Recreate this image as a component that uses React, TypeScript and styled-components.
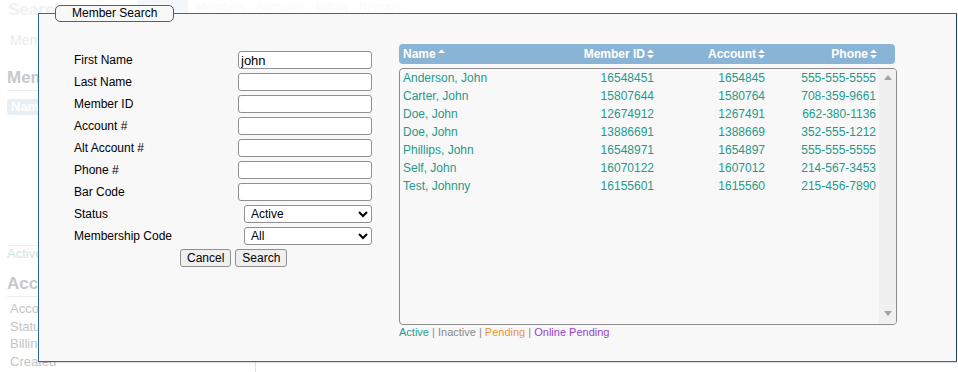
import React from "react";
import styled, { createGlobalStyle } from "styled-components";

const Global = createGlobalStyle`
  html, body { margin: 0; padding: 0; background: #fff; }
  body { font-family: "Liberation Sans", Arial, sans-serif; }
`;

const Page = styled.div`
  position: relative;
  display: flex;
  width: 958px;
  height: 372px;
  overflow: hidden;
  background: #fff;
`;

/* ---------- faded page behind the dialog ---------- */
const Sidebar = styled.div`
  display: flex;
  flex-direction: column;
  width: 255px;
  padding-left: 7px;
  box-sizing: border-box;
  flex: none;
`;

const TopTitle = styled.div`
  height: 20px;
  line-height: 20px;
  font-size: 17px;
  font-weight: bold;
  color: #f1f1f1;
  padding-left: 1px;
`;

const SubTitle = styled.div`
  margin-top: 10px;
  height: 20px;
  line-height: 20px;
  font-size: 14px;
  color: #ebebeb;
  padding-left: 3px;
`;

const FadedHeading = styled.div<{ $top: number }>`
  margin-top: ${(p) => p.$top}px;
  font-size: 17px;
  font-weight: bold;
  line-height: 20px;
  color: #c8c8c8;
  border-bottom: 1px solid #ececec;
  padding-bottom: 2px;
  width: 240px;
`;

const FadedPill = styled.div`
  margin-top: 8px;
  width: 120px;
  height: 16px;
  line-height: 16px;
  border-radius: 4px;
  background: #e6eef6;
  color: #fff;
  font-weight: bold;
  font-size: 13px;
  padding-left: 4px;
`;

const FadedStatus = styled.div`
  margin-top: 130px;
  border-top: 1px solid #efefef;
  width: 240px;
  padding-top: 1px;
  line-height: 14px;
  font-size: 13px;
  color: #cbe7e3;
`;

const FadedItem = styled.div<{ $first?: boolean }>`
  margin-top: ${(p) => (p.$first ? 3 : 0)}px;
  padding-left: 3px;
  line-height: 17.5px;
  font-size: 13px;
  color: #c4c4c4;
`;

const MainFaded = styled.div`
  flex: 1;
  display: flex;
  flex-direction: column;
`;

const TopNav = styled.div`
  display: flex;
  align-items: center;
  gap: 8px;
  height: 14px;
  margin-left: -117px;
`;

const NavBlock = styled.div`
  width: 50px;
  height: 14px;
  background: #f4f7fa;
`;

const NavText = styled.div`
  font-size: 12px;
  color: #fafafa;
`;

const Divider = styled.div`
  margin-top: auto;
  height: 17px;
  border-left: 1px solid #e0e0e0;
`;

/* ---------- dialog ---------- */
const Dialog = styled.fieldset`
  position: absolute;
  left: 38px;
  top: 5px;
  width: 919px;
  height: 357px;
  box-sizing: border-box;
  margin: 0;
  padding: 0;
  border: 1px solid #2f6aa0;
  border-right-color: #1d4466;
  background: #f8f8f8;
  box-shadow: 0 1px 1px rgba(0, 0, 0, 0.12);
`;

const DialogLegend = styled.legend`
  margin-left: 16px;
  padding: 0 16px;
  height: 17px;
  box-sizing: border-box;
  line-height: 15px;
  font-size: 12px;
  color: #000;
  border: 1px solid #2f6aa0;
  border-radius: 5px;
  background: #f8f8f8;
`;

const DialogBody = styled.div`
  display: flex;
  align-items: flex-start;
  padding-left: 35px;
`;

const Form = styled.div`
  margin-top: 27px;
  display: grid;
  grid-template-columns: 164px 134px;
  grid-auto-rows: 22px;
  align-items: center;
  width: 298px;
`;

const Label = styled.div`
  font-size: 12px;
  color: #000;
  white-space: nowrap;
`;

const TextInput = styled.input`
  width: 134px;
  height: 18px;
  box-sizing: border-box;
  margin: 0;
  padding: 0 2px;
  border: 1px solid #8f8f8f;
  border-radius: 3px;
  background: #fff;
  font-family: "Liberation Sans", Arial, sans-serif;
  font-size: 13px;
  color: #000;
  outline: none;
`;

const Select = styled.select`
  justify-self: end;
  width: 128px;
  height: 18px;
  box-sizing: border-box;
  margin: 0;
  padding: 0 0 0 2px;
  border: 1px solid #8f8f8f;
  border-radius: 3px;
  background-color: #fff;
  font-family: "Liberation Sans", Arial, sans-serif;
  font-size: 12px;
  color: #000;
`;

const ButtonRow = styled.div`
  grid-column: 1 / span 2;
  display: flex;
  gap: 4px;
  padding-left: 106px;
`;

const Button = styled.button`
  height: 18px;
  box-sizing: border-box;
  margin: 0;
  padding: 0 6px;
  border: 1px solid #8f8f8f;
  border-radius: 3px;
  background: #efefef;
  font-family: "Liberation Sans", Arial, sans-serif;
  font-size: 12px;
  line-height: 16px;
  color: #000;
`;

const Results = styled.div`
  margin-left: 27px;
  margin-top: 22px;
  width: 498px;
  display: flex;
  flex-direction: column;
`;

const HeaderRow = styled.div`
  display: grid;
  grid-template-columns: 1fr 111px 111px 112px;
  width: 496px;
  height: 20px;
  box-sizing: border-box;
  padding: 0 18px 0 4px;
  align-items: center;
  background: #8ab4d6;
  border-radius: 4px;
  color: #fff;
  font-size: 12px;
  font-weight: bold;
`;

const HeadCell = styled.div<{ $right?: boolean }>`
  display: flex;
  align-items: center;
  justify-content: ${(p) => (p.$right ? "flex-end" : "flex-start")};
  gap: 2px;
  white-space: nowrap;
`;

const ListBox = styled.div`
  margin-top: 4px;
  height: 257px;
  box-sizing: border-box;
  display: flex;
  border: 1px solid #8c8c8c;
  border-radius: 4px;
  background: #f8f8f8;
  overflow: hidden;
`;

const Rows = styled.div`
  flex: 1;
  display: flex;
  flex-direction: column;
`;

const Row = styled.div`
  display: grid;
  grid-template-columns: 1fr 111px 111px 111px;
  height: 18px;
  line-height: 18px;
  padding: 0 3px;
  font-size: 12px;
  color: #1f9a8c;
`;

const Cell = styled.div<{ $right?: boolean }>`
  text-align: ${(p) => (p.$right ? "right" : "left")};
  white-space: nowrap;
`;

const Scrollbar = styled.div`
  width: 17px;
  flex: none;
  background: #f0f0f0;
  display: flex;
  flex-direction: column;
  align-items: center;
  justify-content: space-between;
  padding: 6px 0 8px;
  box-sizing: border-box;
`;

const StatusKey = styled.div`
  margin-top: 1px;
  line-height: 13px;
  font-size: 11px;
  color: #8a8a8a;
  white-space: pre;
`;

const KeyItem = styled.span<{ $color: string }>`
  color: ${(p) => p.$color};
`;

const SortIcon = ({ only }: { only?: "up" }) => (
  <svg width="7" height="10" viewBox="0 0 7 10" aria-hidden="true">
    <path d="M3.5 0.5 L7 4 L0 4 Z" fill="#fff" />
    {only !== "up" && <path d="M0 6 L7 6 L3.5 9.5 Z" fill="#fff" />}
  </svg>
);

const Arrow = ({ dir }: { dir: "up" | "down" }) => (
  <svg width="8" height="5" viewBox="0 0 8 5" aria-hidden="true">
    {dir === "up" ? (
      <path d="M4 0 L8 5 L0 5 Z" fill="#a3a3a3" />
    ) : (
      <path d="M0 0 L8 0 L4 5 Z" fill="#a3a3a3" />
    )}
  </svg>
);

const rows: [string, string, string, string][] = [
  ["Anderson, John", "16548451", "1654845", "555-555-5555"],
  ["Carter, John", "15807644", "1580764", "708-359-9661"],
  ["Doe, John", "12674912", "1267491", "662-380-1136"],
  ["Doe, John", "13886691", "1388669", "352-555-1212"],
  ["Phillips, John", "16548971", "1654897", "555-555-5555"],
  ["Self, John", "16070122", "1607012", "214-567-3453"],
  ["Test, Johnny", "16155601", "1615560", "215-456-7890"],
];

const textFields = [
  ["First Name", "john"],
  ["Last Name", ""],
  ["Member ID", ""],
  ["Account #", ""],
  ["Alt Account #", ""],
  ["Phone #", ""],
  ["Bar Code", ""],
];

export default function App() {
  return (
    <>
      <Global />
      <Page>
        <Sidebar>
          <TopTitle>Search</TopTitle>
          <SubTitle>Member</SubTitle>
          <FadedHeading $top={18}>Member</FadedHeading>
          <FadedPill>Name</FadedPill>
          <FadedStatus>Active</FadedStatus>
          <FadedHeading $top={13}>Account</FadedHeading>
          <FadedItem $first>Account</FadedItem>
          <FadedItem>Status</FadedItem>
          <FadedItem>Billing</FadedItem>
          <FadedItem>Created</FadedItem>
        </Sidebar>
        <MainFaded>
          <TopNav>
            <NavBlock />
            <NavText>Members · Accounts · Billing · Reports</NavText>
          </TopNav>
          <Divider />
        </MainFaded>

        <Dialog>
          <DialogLegend>Member Search</DialogLegend>
          <DialogBody>
            <Form>
              {textFields.map(([label, value]) => (
                <React.Fragment key={label}>
                  <Label>{label}</Label>
                  <TextInput defaultValue={value} />
                </React.Fragment>
              ))}
              <Label>Status</Label>
              <Select defaultValue="Active">
                <option>Active</option>
                <option>Inactive</option>
                <option>Pending</option>
              </Select>
              <Label>Membership Code</Label>
              <Select defaultValue="All">
                <option>All</option>
              </Select>
              <ButtonRow>
                <Button>Cancel</Button>
                <Button>Search</Button>
              </ButtonRow>
            </Form>

            <Results>
              <HeaderRow>
                <HeadCell>
                  Name <SortIcon only="up" />
                </HeadCell>
                <HeadCell $right>
                  Member ID <SortIcon />
                </HeadCell>
                <HeadCell $right>
                  Account <SortIcon />
                </HeadCell>
                <HeadCell $right>
                  Phone <SortIcon />
                </HeadCell>
              </HeaderRow>
              <ListBox>
                <Rows>
                  {rows.map((r, i) => (
                    <Row key={i}>
                      <Cell>{r[0]}</Cell>
                      <Cell $right>{r[1]}</Cell>
                      <Cell $right>{r[2]}</Cell>
                      <Cell $right>{r[3]}</Cell>
                    </Row>
                  ))}
                </Rows>
                <Scrollbar>
                  <Arrow dir="up" />
                  <Arrow dir="down" />
                </Scrollbar>
              </ListBox>
              <StatusKey>
                <KeyItem $color="#1f9a8c">Active</KeyItem>
                {" | "}
                <KeyItem $color="#8a8a8a">Inactive</KeyItem>
                {" | "}
                <KeyItem $color="#f39236">Pending</KeyItem>
                {" | "}
                <KeyItem $color="#9a3fcf">Online Pending</KeyItem>
              </StatusKey>
            </Results>
          </DialogBody>
        </Dialog>
      </Page>
    </>
  );
}
